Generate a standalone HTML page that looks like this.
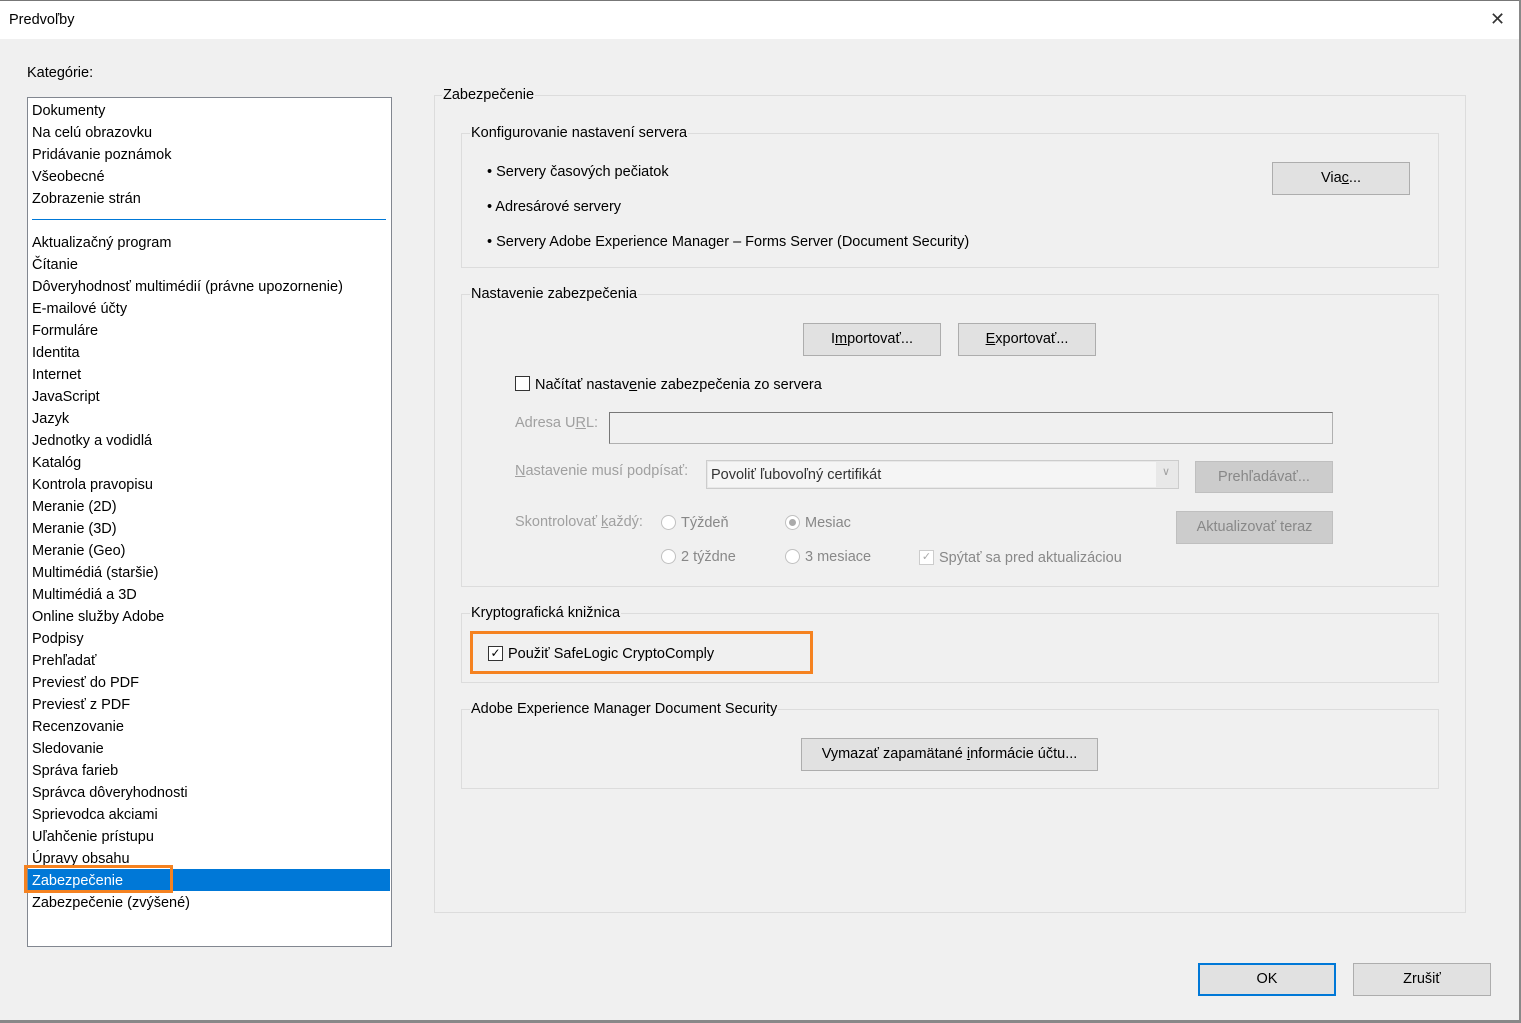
<!DOCTYPE html>
<html><head><meta charset="utf-8"><style>
*{margin:0;padding:0;box-sizing:border-box}
body{width:1521px;height:1023px;background:#f0f0f0;font-family:"Liberation Sans",sans-serif;font-size:14.5px;color:#000;position:relative;overflow:hidden}
.a{position:absolute;white-space:nowrap}
.g{position:absolute;border:1px solid #dcdcdc}
.g>.l{position:absolute;top:-10px;left:8px;background:#f0f0f0;padding:0 1px;line-height:18px}
.btn{position:absolute;background:#e1e1e1;border:1px solid #adadad;text-align:center;font-size:14.5px}
.dis{color:#a0a0a0}
.li{position:absolute;left:32px;line-height:22px;margin-top:1px}
.rad{position:absolute;width:15px;height:15px;border-radius:50%;border:1px solid #c0c0c0;background:#fff}
</style></head><body>
<div class="a" style="left:0;top:0;width:1521px;height:39px;background:#fff;border-top:1px solid #777"></div>
<div class="a" style="left:9px;top:12px">Predvoľby</div>
<div class="a" style="left:1490px;top:7px;font-size:18px;line-height:24px;color:#333">✕</div>
<div class="a" style="left:1519px;top:0;width:2px;height:1023px;background:#888"></div>
<div class="a" style="left:0;top:1020px;width:1521px;height:3px;background:#888"></div>

<div class="a" style="left:27px;top:65px">Kategórie:</div>
<div class="a" style="left:27px;top:97px;width:365px;height:850px;background:#fff;border:1px solid #828790"></div>
<div class="li" style="top:99px">Dokumenty</div>
<div class="li" style="top:121px">Na celú obrazovku</div>
<div class="li" style="top:143px">Pridávanie poznámok</div>
<div class="li" style="top:165px">Všeobecné</div>
<div class="li" style="top:187px">Zobrazenie strán</div>
<div class="a" style="left:32px;top:219px;width:354px;height:1px;background:#0078d7"></div>
<div class="li" style="top:231px">Aktualizačný program</div>
<div class="li" style="top:253px">Čítanie</div>
<div class="li" style="top:275px">Dôveryhodnosť multimédií (právne upozornenie)</div>
<div class="li" style="top:297px">E-mailové účty</div>
<div class="li" style="top:319px">Formuláre</div>
<div class="li" style="top:341px">Identita</div>
<div class="li" style="top:363px">Internet</div>
<div class="li" style="top:385px">JavaScript</div>
<div class="li" style="top:407px">Jazyk</div>
<div class="li" style="top:429px">Jednotky a vodidlá</div>
<div class="li" style="top:451px">Katalóg</div>
<div class="li" style="top:473px">Kontrola pravopisu</div>
<div class="li" style="top:495px">Meranie (2D)</div>
<div class="li" style="top:517px">Meranie (3D)</div>
<div class="li" style="top:539px">Meranie (Geo)</div>
<div class="li" style="top:561px">Multimédiá (staršie)</div>
<div class="li" style="top:583px">Multimédiá a 3D</div>
<div class="li" style="top:605px">Online služby Adobe</div>
<div class="li" style="top:627px">Podpisy</div>
<div class="li" style="top:649px">Prehľadať</div>
<div class="li" style="top:671px">Previesť do PDF</div>
<div class="li" style="top:693px">Previesť z PDF</div>
<div class="li" style="top:715px">Recenzovanie</div>
<div class="li" style="top:737px">Sledovanie</div>
<div class="li" style="top:759px">Správa farieb</div>
<div class="li" style="top:781px">Správca dôveryhodnosti</div>
<div class="li" style="top:803px">Sprievodca akciami</div>
<div class="li" style="top:825px">Uľahčenie prístupu</div>
<div class="li" style="top:847px">Úpravy obsahu</div>
<div class="a" style="left:28px;top:869px;width:362px;height:22px;background:#0078d7"></div>
<div class="li" style="top:869px;color:#fff">Zabezpečenie</div>
<div class="a" style="left:24px;top:865px;width:149px;height:28px;border:3px solid #f58220"></div>
<div class="li" style="top:891px">Zabezpečenie (zvýšené)</div>

<div class="g" style="left:434px;top:95px;width:1032px;height:818px"><span class="l" style="left:7px">Zabezpečenie</span></div>

<div class="g" style="left:461px;top:133px;width:978px;height:135px"><span class="l">Konfigurovanie nastavení servera</span></div>
<div class="a" style="left:487px;top:164px">• Servery časových pečiatok</div>
<div class="a" style="left:487px;top:199px">• Adresárové servery</div>
<div class="a" style="left:487px;top:234px">• Servery Adobe Experience Manager – Forms Server (Document Security)</div>
<div class="btn" style="left:1272px;top:162px;width:138px;height:33px;line-height:31px">Via<u>c</u>...</div>

<div class="g" style="left:461px;top:294px;width:978px;height:293px"><span class="l">Nastavenie zabezpečenia</span></div>
<div class="btn" style="left:803px;top:323px;width:138px;height:33px;line-height:31px">I<u>m</u>portovať...</div>
<div class="btn" style="left:958px;top:323px;width:138px;height:33px;line-height:31px"><u>E</u>xportovať...</div>
<div class="a" style="left:515px;top:376px;width:15px;height:15px;border:1px solid #333;background:#fff"></div>
<div class="a" style="left:535px;top:377px">Načítať nastav<u>e</u>nie zabezpečenia zo servera</div>
<div class="a dis" style="left:515px;top:415px">Adresa U<u>R</u>L:</div>
<div class="a" style="left:609px;top:412px;width:724px;height:32px;border:1px solid #b0b0b0;border-top-color:#777;border-left-color:#777;background:#f0f0f0"></div>
<div class="a dis" style="left:515px;top:463px"><u>N</u>astavenie musí podpísať:</div>
<div class="a" style="left:706px;top:460px;width:473px;height:29px;border:1px solid #ccc;background:#e8e8e8"></div>
<div class="a" style="left:708px;top:462px;width:448px;height:25px;background:#f5f5f5"></div>
<div class="a" style="left:711px;top:467px;color:#333">Povoliť ľubovoľný certifikát</div>
<div class="a dis" style="left:1162px;top:465px;font-size:11px">∨</div>
<div class="btn dis" style="left:1195px;top:461px;width:138px;height:32px;line-height:30px;background:#ccc;border-color:#bfbfbf;color:#888">Prehľadávať...</div>
<div class="a dis" style="left:515px;top:514px">Skontrolovať <u>k</u>aždý:</div>
<div class="rad" style="left:661px;top:515px"></div><div class="a dis" style="left:681px;top:515px;color:#888">Týždeň</div>
<div class="rad" style="left:785px;top:515px"><div style="position:absolute;left:3px;top:3px;width:7px;height:7px;border-radius:50%;background:#aaa"></div></div><div class="a" style="left:805px;top:515px;color:#888">Mesiac</div>
<div class="btn" style="left:1176px;top:511px;width:157px;height:33px;line-height:31px;background:#ccc;border-color:#bfbfbf;color:#888">Aktualizovať teraz</div>
<div class="rad" style="left:661px;top:549px"></div><div class="a" style="left:681px;top:549px;color:#888">2 týždne</div>
<div class="rad" style="left:785px;top:549px"></div><div class="a" style="left:805px;top:549px;color:#888">3 mesiace</div>
<div class="a" style="left:919px;top:550px;width:15px;height:15px;border:1px solid #ccc;background:#fff;font-size:11px;line-height:13px;text-align:center;color:#aaa">✓</div>
<div class="a" style="left:939px;top:550px;color:#888">Spýtať sa pred aktualizáciou</div>

<div class="g" style="left:461px;top:613px;width:978px;height:70px"><span class="l">Kryptografická knižnica</span></div>
<div class="a" style="left:488px;top:646px;width:15px;height:15px;border:1px solid #333;background:#fff;font-size:12px;line-height:13px;text-align:center">✓</div>
<div class="a" style="left:508px;top:646px">Použiť SafeLogic CryptoComply</div>
<div class="a" style="left:470px;top:631px;width:343px;height:43px;border:3px solid #f58220"></div>

<div class="g" style="left:461px;top:709px;width:978px;height:80px"><span class="l">Adobe Experience Manager Document Security</span></div>
<div class="btn" style="left:801px;top:738px;width:297px;height:33px;line-height:31px">Vymazať zapamätané <u>i</u>nformácie účtu...</div>

<div class="btn" style="left:1198px;top:963px;width:138px;height:33px;line-height:29px;border:2px solid #0078d7">OK</div>
<div class="btn" style="left:1353px;top:963px;width:138px;height:33px;line-height:31px">Zrušiť</div>
</body></html>
